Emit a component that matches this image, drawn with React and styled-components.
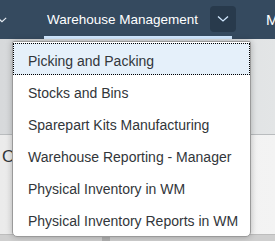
import React from 'react';
import styled, { createGlobalStyle } from 'styled-components';

const items = [
  'Picking and Packing',
  'Stocks and Bins',
  'Sparepart Kits Manufacturing',
  'Warehouse Reporting - Manager',
  'Physical Inventory in WM',
  'Physical Inventory Reports in WM',
];

export default function App() {
  return (
    <>
      <GlobalStyle />
      <Screen>
        <Header>
          <EdgeChevron>
            <svg width="12" height="8" viewBox="0 0 12 8">
              <path d="M1 1.5 L6 6 L11 1.5" fill="none" stroke="#e8eef4" strokeWidth="1.4" />
            </svg>
          </EdgeChevron>
          <Tab>
            <TabTitle>Warehouse Management</TabTitle>
            <MenuButton>
              <svg width="12" height="8" viewBox="0 0 12 8">
                <path d="M1 1.5 L6 6 L11 1.5" fill="none" stroke="#d1e8ff" strokeWidth="1.3" />
              </svg>
            </MenuButton>
          </Tab>
          <NextTab>M</NextTab>
        </Header>
        <Body>
          <GreyBand />
          <LowerArea>
            <Letter>O</Letter>
          </LowerArea>
          <BottomBand>
            <Handle />
          </BottomBand>
        </Body>
        <Menu>
          {items.map((item, index) => (
            <Item key={index} selected={index === 0}>
              {item}
            </Item>
          ))}
        </Menu>
      </Screen>
    </>
  );
}

const GlobalStyle = createGlobalStyle`
  html, body {
    margin: 0;
    padding: 0;
    overflow: hidden;
  }
  body {
    font-family: "Liberation Sans", Arial, sans-serif;
  }
`;

const Screen = styled.div`
  position: relative;
  width: 275px;
  height: 241px;
  overflow: hidden;
  display: flex;
  flex-direction: column;
  background: #f0f0f0;
`;

const Header = styled.div`
  height: 39px;
  flex-shrink: 0;
  display: flex;
  align-items: center;
  background: #354a5f;
  color: #ffffff;
  white-space: nowrap;
`;

const EdgeChevron = styled.div`
  width: 10px;
  flex-shrink: 0;
  margin-left: -3px;
  display: flex;
  align-items: center;
`;

const Tab = styled.div`
  position: relative;
  flex-shrink: 0;
  margin-left: 37px;
  width: 192px;
  height: 39px;
  display: flex;
  align-items: center;
  &::after {
    content: '';
    position: absolute;
    left: 0;
    right: 4px;
    bottom: 0;
    height: 3px;
    background: #d1e8ff;
  }
`;

const TabTitle = styled.span`
  width: 163px;
  padding-left: 3px;
  font-size: 13.5px;
  color: #ffffff;
`;

const MenuButton = styled.div`
  width: 26px;
  height: 26px;
  flex-shrink: 0;
  margin-top: -2px;
  border-radius: 4px;
  background: #283a4c;
  display: flex;
  align-items: center;
  justify-content: center;
`;

const NextTab = styled.span`
  margin-left: 30px;
  font-size: 15px;
  color: #ffffff;
`;

const Body = styled.div`
  flex: 1;
  display: flex;
  flex-direction: column;
`;

const GreyBand = styled.div`
  height: 95px;
  background: linear-gradient(90deg, #d7d9db 0%, #dde0e2 70%, #e3e5e6 100%);
  border-bottom: 1px solid #b9bcbe;
`;

const LowerArea = styled.div`
  flex: 1;
  background: linear-gradient(90deg, #ebebeb 0%, #f3f3f3 100%);
  padding: 12px 0 0 2px;
`;

const Letter = styled.span`
  font-size: 17px;
  color: #32363a;
`;

const BottomBand = styled.div`
  height: 6px;
  background: #cfcfcf;
  border-top: 1px solid #bdbdbd;
  padding-left: 102px;
`;

const Handle = styled.div`
  width: 8px;
  height: 100%;
  background: #b0b0b0;
`;

const Menu = styled.div`
  position: absolute;
  left: 12px;
  top: 41px;
  width: 237px;
  padding: 1px 0;
  background: #ffffff;
  border: 1px solid #9a9a9a;
  border-radius: 2px 2px 5px 5px;
  box-shadow: 0 0 6px rgba(0, 0, 0, 0.25);
`;

const Item = styled.div`
  height: 32px;
  box-sizing: border-box;
  display: flex;
  align-items: center;
  padding-left: 15px;
  padding-top: 3px;
  font-size: 14px;
  color: #32363a;
  white-space: nowrap;
  background: ${(p) => (p.selected ? '#e5f0fa' : 'transparent')};
  outline: ${(p) => (p.selected ? '1px dotted #000000' : 'none')};
  outline-offset: -1px;
`;
